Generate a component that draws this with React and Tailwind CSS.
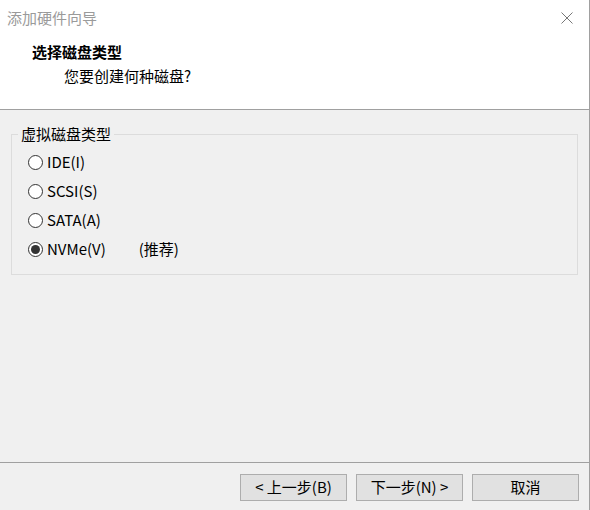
import React, { useState } from 'react';

const FONT = { fontFamily: '"Noto Sans CJK SC", "Noto Sans", sans-serif' };

const Radio = ({ checked, label, extra, onSelect }) => (
  <div className="flex items-center h-[29px] cursor-default" onClick={onSelect}>
    <span className="w-[15px] h-[15px] rounded-full border border-[#333] bg-white flex items-center justify-center">
      {checked && <span className="w-[9px] h-[9px] rounded-full bg-[#333]" />}
    </span>
    <span className="ml-[4px] text-[15px] text-black">{label}</span>
    {extra && <span className="ml-[33px] text-[15px] text-black">{extra}</span>}
  </div>
);

export default function App() {
  const [type, setType] = useState('nvme');
  const options = [
    { id: 'ide', label: 'IDE(I)' },
    { id: 'scsi', label: 'SCSI(S)' },
    { id: 'sata', label: 'SATA(A)' },
    { id: 'nvme', label: 'NVMe(V)', extra: '(推荐)' },
  ];

  return (
    <div style={FONT} className="w-[590px] h-[510px] flex flex-col bg-[#f0f0f0] border-r border-[#a0a0a0]">
      {/* Header */}
      <div className="h-[110px] bg-white border-b border-[#a0a0a0] flex flex-col">
        <div className="h-[36px] flex items-center justify-between pl-[7px] pr-[15px]">
          <span className="text-[15px] text-[#9a9a9a]">添加硬件向导</span>
          <svg width="12" height="12" viewBox="0 0 12 12" className="mr-[1px]">
            <path d="M0.5 0.5 L11.5 11.5 M11.5 0.5 L0.5 11.5" stroke="#777" strokeWidth="1" />
          </svg>
        </div>
        <div className="pl-[32px] pt-[5px] text-[15px] font-bold text-black leading-[22px]">选择磁盘类型</div>
        <div className="pl-[64px] pt-[2px] text-[15px] text-black leading-[22px]">您要创建何种磁盘?</div>
      </div>

      {/* Body */}
      <div className="flex-1 px-[11px] pt-[16px]">
        <fieldset className="border border-[#dcdcdc] h-[149px] pt-[6px]">
          <legend className="ml-[6px] px-[3px] text-[15px] text-black leading-[16px]">虚拟磁盘类型</legend>
          <div className="pl-[16px]">
            {options.map((o) => (
              <Radio
                key={o.id}
                label={o.label}
                extra={o.extra}
                checked={type === o.id}
                onSelect={() => setType(o.id)}
              />
            ))}
          </div>
        </fieldset>
      </div>

      {/* Footer */}
      <div className="h-[48px] border-t border-[#a0a0a0] flex items-start justify-end pt-[11px] pr-[10px] gap-[9px]">
        <button className="w-[107px] h-[27px] bg-[#e1e1e1] border border-[#adadad] text-[15px] text-black">&lt; 上一步(B)</button>
        <button className="w-[107px] h-[27px] bg-[#e1e1e1] border border-[#adadad] text-[15px] text-black">下一步(N) &gt;</button>
        <button className="w-[107px] h-[27px] bg-[#e1e1e1] border border-[#adadad] text-[15px] text-black">取消</button>
      </div>
    </div>
  );
}
